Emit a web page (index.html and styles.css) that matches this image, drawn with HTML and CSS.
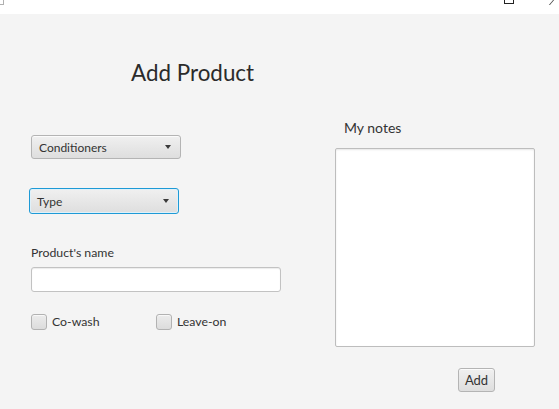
FILE: index.html
```html
<!DOCTYPE html>
<html>
<head>
<meta charset="utf-8">
<link rel="stylesheet" href="styles.css">
</head>
<body>
<div class="titlebar">
  <span class="tb-left"></span>
  <span class="tb-spacer"></span>
  <span class="tb-max"></span>
  <span class="tb-close"></span>
</div>
<div class="main">
  <div class="left">
    <h1 class="title">Add Product</h1>
    <div class="combo combo-cat"><span class="combo-text">Conditioners</span><span class="arrow"></span></div>
    <div class="combo combo-type focused"><span class="combo-text">Type</span><span class="arrow"></span></div>
    <div class="field-label">Product's name</div>
    <div class="textfield"></div>
    <div class="checks">
      <div class="check check-first"><span class="box"></span><span class="check-label">Co-wash</span></div>
      <div class="check"><span class="box"></span><span class="check-label">Leave-on</span></div>
    </div>
  </div>
  <div class="right">
    <div class="notes-label">My notes</div>
    <div class="textarea"></div>
    <div class="btn">Add</div>
  </div>
</div>
</body>
</html>
```
FILE: styles.css
```css
* { box-sizing: border-box; }
html, body {
  margin: 0;
  padding: 0;
}
body {
  width: 559px;
  height: 409px;
  overflow: hidden;
  background: #f4f4f4;
  font-family: "Lato", "Open Sans", sans-serif;
  color: #333333;
}
.titlebar {
  height: 14px;
  background: #ffffff;
  display: flex;
  align-items: flex-start;
  overflow: hidden;
}
.tb-left {
  width: 4px;
  height: 5px;
  border-right: 1px solid #b0b0b0;
  border-bottom: 1px solid #b0b0b0;
  flex: none;
}
.tb-spacer { flex: 1; }
.tb-max {
  width: 10px;
  height: 10px;
  margin-top: -6px;
  border: 1px solid #222;
  flex: none;
}
.tb-close {
  width: 6px;
  height: 5px;
  margin-left: 37px;
  margin-right: 2px;
  border-left: 1px solid #444;
  transform: skewX(-40deg);
  flex: none;
}
.main {
  display: flex;
}
.left {
  width: 335px;
  flex: none;
  display: flex;
  flex-direction: column;
  align-items: flex-start;
}
.title {
  margin: 43px 0 0 131px;
  font-size: 22.4px;
  line-height: 32px;
  font-weight: 400;
  color: #2b2b2b;
}
.combo {
  width: 150px;
  height: 24px;
  border: 1px solid #b4b4b4;
  border-radius: 3px;
  background: linear-gradient(#f0f0f0, #dedede);
  box-shadow: inset 0 1px 0 #fbfbfb;
  display: flex;
  align-items: center;
  justify-content: space-between;
  padding: 0 9px 0 7px;
  font-size: 12px;
}
.combo-cat {
  margin: 46px 0 0 31px;
}
.combo-type {
  margin: 29px 0 0 29px;
  height: 26px;
}
.focused {
  border: 1px solid #1e9ad6;
  box-shadow: inset 0 0 0 1px #dff1fa;
}
.arrow {
  width: 0;
  height: 0;
  border-left: 3.5px solid transparent;
  border-right: 3.5px solid transparent;
  border-top: 4px solid #3a3a3a;
}
.field-label {
  margin: 31px 0 0 31px;
  font-size: 12.3px;
  line-height: 16px;
}
.textfield {
  margin: 6px 0 0 31px;
  width: 250px;
  height: 25px;
  background: #ffffff;
  border: 1px solid #c2c2c2;
  border-radius: 3px;
  box-shadow: inset 0 1px 1px #ececec;
}
.checks {
  margin: 22px 0 0 31px;
  display: flex;
}
.check {
  display: flex;
  align-items: center;
  gap: 5px;
  font-size: 12.3px;
  line-height: 16px;
}
.check-first {
  width: 125px;
}
.box {
  width: 16px;
  height: 16px;
  border: 1px solid #b2b2b2;
  border-radius: 3px;
  background: linear-gradient(#ececec, #dcdcdc);
  box-shadow: inset 0 1px 0 #f8f8f8;
}
.right {
  width: 200px;
  flex: none;
  display: flex;
  flex-direction: column;
  align-items: flex-start;
}
.notes-label {
  margin: 105px 0 0 9px;
  font-size: 14px;
  line-height: 18px;
}
.textarea {
  margin-top: 11px;
  width: 200px;
  height: 199px;
  background: #ffffff;
  border: 1px solid #bdbdbd;
  border-radius: 2px;
  box-shadow: inset 0 1px 2px #e6e6e6;
}
.btn {
  margin: 21px 0 0 123px;
  width: 37px;
  height: 24px;
  border: 1px solid #b4b4b4;
  border-radius: 3px;
  background: linear-gradient(#f0f0f0, #dedede);
  box-shadow: inset 0 1px 0 #fbfbfb;
  display: flex;
  align-items: center;
  justify-content: center;
  font-size: 13px;
}
```
